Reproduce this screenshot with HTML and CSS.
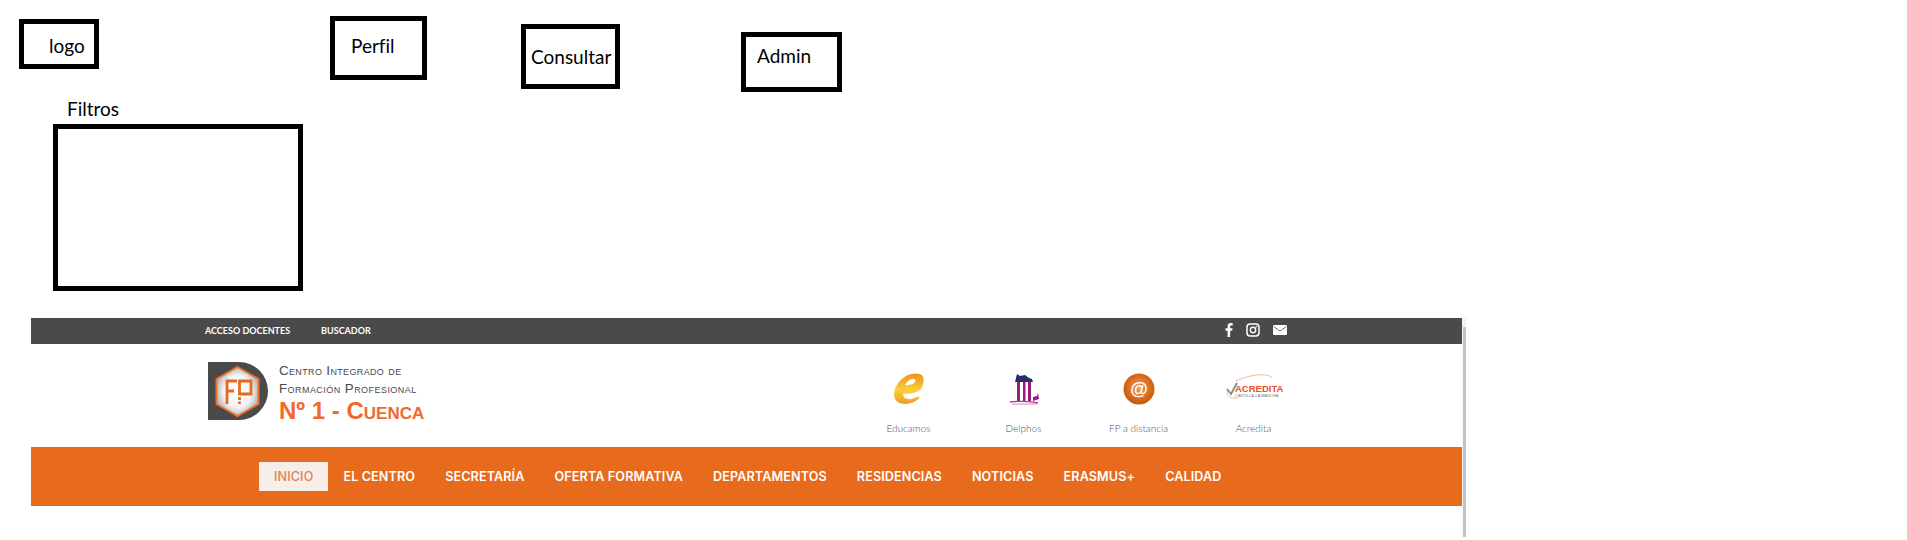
FILE: index.html
```html
<!DOCTYPE html>
<html lang="es">
<head>
<meta charset="utf-8">
<title>Boceto</title>
<link rel="stylesheet" href="styles.css">
</head>
<body>
<div class="canvas">
  <div class="box box-logo"><span class="box-text">logo</span></div>
  <div class="box box-perfil"><span class="box-text">Perfil</span></div>
  <div class="box box-consultar"><span class="box-text">Consultar</span></div>
  <div class="box box-admin"><span class="box-text">Admin</span></div>
  <div class="filter-label box-text">Filtros</div>
  <div class="box box-filtros"></div>

  <section class="site">
    <div class="topbar">
      <a class="top-link">ACCESO DOCENTES</a>
      <a class="top-link">BUSCADOR</a>
      <div class="social">
        <svg class="soc soc-f" viewBox="0 0 9 16"><path fill="#fff" d="M5.8 16V8.8h2.4l.4-2.8H5.8V4.2c0-.8.2-1.3 1.400-1.300h1.500V.3C8.400.2 7.600 0 6.500 0 4.300 0 2.900 1.300 2.900 3.800V6H.5v2.800h2.400V16z"/></svg>
        <svg class="soc soc-i" viewBox="0 0 14 14"><rect x="1" y="1" width="12" height="12" rx="3.200" fill="none" stroke="#fff" stroke-width="1.500"/><circle cx="7" cy="7" r="2.700" fill="none" stroke="#fff" stroke-width="1.400"/><circle cx="10.400" cy="3.600" r=".8" fill="#fff"/></svg>
        <svg class="soc soc-m" viewBox="0 0 14 10"><rect width="14" height="10" rx="1" fill="#fff"/><path d="M.5 1.500 7 6l6.500-4.500" fill="none" stroke="#494a49" stroke-width=".8"/></svg>
      </div>
    </div>

    <div class="masthead">
      <div class="brand">
        <svg class="brand-mark" viewBox="0 0 60 58">
          <defs>
            <radialGradient id="hexfill" cx=".5" cy=".5" r=".55">
              <stop offset="0" stop-color="#fff"/><stop offset=".6" stop-color="#f4f4f4"/><stop offset="1" stop-color="#a9a9a9"/>
            </radialGradient>
          </defs>
          <path fill="#4a4a4a" d="M0 0h31a29 29 0 0 1 0 58H0z"/>
          <path fill="url(#hexfill)" stroke="#e8742c" stroke-width="2" d="M29.500 5l21 12v25l-21 12-21-12V17z"/>
          <path fill="none" stroke="#e8691f" stroke-width="2.800" d="M19 42V19h10M19 29h7M31.500 19H43V32H31.500z"/>
          <path fill="none" stroke="#e8691f" stroke-width="2.800" d="M31.500 35v3M31.500 39.500v2.500"/>
        </svg>
        <div class="brand-text">
          <div class="brand-line">Centro Integrado de</div>
          <div class="brand-line brand-second">Formación Profesional</div>
          <div class="brand-name">Nº 1 - Cuenca</div>
        </div>
      </div>
      <div class="quick">
        <div class="quick-item">
          <svg class="quick-icon" viewBox="0 0 32 32">
            <defs><linearGradient id="eg" x1="0" y1="0" x2="0" y2="1"><stop offset="0" stop-color="#ef9021"/><stop offset=".55" stop-color="#fbd13a"/><stop offset="1" stop-color="#ef9a2a"/></linearGradient></defs>
            <path fill="url(#eg)" d="M29.500 3c-3-3.300-11-3.300-17.500.8C5 8.200 1 15.500 1 21.500c0 6.800 5.500 9.500 11 9.500 5.500 0 11-2.300 14.500-6l-1-1.700c-3.500 2-7 3-10 2.800-3.500-.2-5.500-2-5.300-5.500 7 .3 14-.7 17.800-4.600C31 12 31.500 6 29.500 3zm-7 4.800c-.6 2.800-5 4.700-10.500 4.700 1.500-3.300 4.500-6.500 7.500-6.500 1.800 0 3.300.4 3 1.800z"/>
          </svg>
          <span class="quick-label">Educamos</span>
        </div>
        <div class="quick-item">
          <svg class="quick-icon" viewBox="0 0 32 32">
            <path fill="#23306b" d="M7 9l2-8 3 2 5-1 4 3 3 1 1 3z"/>
            <path fill="#9a1c78" d="M9 9h3v19H9zM15 9h2.500v19H15zM20 9h3v19h-3zM25 24l4-1 1-3 1 6-6 2z"/>
            <path fill="none" stroke="#b23a92" stroke-width="1.300" d="M2 29c7-1 20-1 28 1"/>
            <path fill="none" stroke="#d687c0" stroke-width="1" d="M4 31h25"/>
          </svg>
          <span class="quick-label">Delphos</span>
        </div>
        <div class="quick-item">
          <svg class="quick-icon" viewBox="0 0 32 32">
            <defs><radialGradient id="ag" cx=".5" cy=".45" r=".55"><stop offset="0" stop-color="#ef9c5c"/><stop offset=".7" stop-color="#d9691b"/><stop offset="1" stop-color="#c2570f"/></radialGradient></defs>
            <circle cx="16" cy="16" r="15.500" fill="url(#ag)"/>
            <text class="at-sign" x="16" y="22" text-anchor="middle">@</text>
          </svg>
          <span class="quick-label">FP a distancia</span>
        </div>
        <div class="quick-item">
          <svg class="quick-icon quick-acredita" viewBox="0 0 60 32">
            <path fill="none" stroke="#f0a184" stroke-width=".8" d="M12 8C24 2 44-1 48 5M4 17c-3 6 2 9 10 8"/>
            <path fill="none" stroke="#8b8b8b" stroke-width="2" d="M3 16l4 5 6-11"/>
            <text class="acr-title" x="11" y="19">ACREDITA</text>
            <text class="acr-sub" x="11" y="24">CASTILLA-LA MANCHA</text>
          </svg>
          <span class="quick-label">Acredita</span>
        </div>
      </div>
    </div>

    <nav class="nav">
      <a class="nav-item is-active">INICIO</a>
      <a class="nav-item">EL CENTRO</a>
      <a class="nav-item">SECRETARÍA</a>
      <a class="nav-item">OFERTA FORMATIVA</a>
      <a class="nav-item">DEPARTAMENTOS</a>
      <a class="nav-item">RESIDENCIAS</a>
      <a class="nav-item">NOTICIAS</a>
      <a class="nav-item">ERASMUS+</a>
      <a class="nav-item">CALIDAD</a>
    </nav>
    <div class="scroll-track"><div class="scroll-thumb"></div></div>
  </section>
</div>
</body>
</html>
```
FILE: styles.css
```css
* { box-sizing: border-box; }
html, body { margin: 0; padding: 0; background: #fff; overflow: hidden; }
.canvas { position: relative; width: 1907px; height: 540px; background: #fff; font-family: "Liberation Sans", sans-serif; }

.box { position: absolute; border: 5px solid #000; background: #fff; }
.box-text { position: absolute; font-family: Lato, sans-serif; font-size: 19px; line-height: 24px; color: #000; white-space: nowrap; font-variant-ligatures: none; }
.box-logo { left: 19px; top: 19px; width: 80px; height: 50px; }
.box-logo .box-text { left: 25px; top: 10px; }
.box-perfil { left: 330px; top: 16px; width: 97px; height: 64px; }
.box-perfil .box-text { left: 16px; top: 13px; }
.box-consultar { left: 521px; top: 24px; width: 99px; height: 65px; }
.box-consultar .box-text { left: 5px; top: 16px; }
.box-admin { left: 741px; top: 32px; width: 101px; height: 60px; }
.box-admin .box-text { left: 11px; top: 7px; }
.filter-label { left: 67px; top: 97px; }
.box-filtros { left: 53px; top: 124px; width: 250px; height: 167px; }

.site { position: absolute; left: 31px; top: 318px; width: 1431px; height: 222px; }
.scroll-track { position: absolute; left: 1431px; top: 0; width: 4px; height: 219px; background: #f3f3f3; }
.scroll-thumb { margin: 9px 0 0 1px; width: 3px; height: 210px; background: #c4c4c4; }

.topbar { display: flex; align-items: center; height: 26px; padding: 0 0 2px 174px; background: #494a49; }
.top-link { font-family: Lato, sans-serif; font-size: 9px; font-weight: 700; color: #fff; margin-right: 31px; white-space: nowrap; }
.social { display: flex; align-items: center; gap: 13px; margin-left: 823px; }
.soc { display: block; }
.soc-f { width: 8px; height: 14px; }
.soc-i { width: 14px; height: 14px; }
.soc-m { width: 14px; height: 10px; }

.masthead { display: flex; height: 103px; }
.brand { display: flex; gap: 11px; margin-left: 177px; padding-top: 18px; width: 643px; }
.brand-mark { display: block; width: 60px; height: 58px; }
.brand-text { width: 160px; }
.brand-line { font-variant: small-caps; font-size: 13.400px; letter-spacing: .35px; line-height: 18px; height: 18px; color: #4a4a4a; white-space: nowrap; }
.brand-second { height: 15px; font-size: 13.300px; letter-spacing: .45px; }
.brand-name { margin-top: 4px; font-variant: small-caps; font-size: 24px; line-height: 24px; font-weight: 700; color: #f2682c; white-space: nowrap; }

.quick { display: flex; }
.quick-item { display: flex; flex-direction: column; align-items: center; width: 115px; padding-top: 29px; }
.quick-icon { display: block; width: 32px; height: 32px; }
.quick-acredita { width: 60px; }
.quick-label { margin-top: 16px; font-family: Lato, sans-serif; font-weight: 300; font-size: 10px; line-height: 14px; color: #555; white-space: nowrap; }
.at-sign { font-family: "Liberation Sans", sans-serif; font-size: 18px; font-weight: 700; fill: #fff; }
.acr-title { font-family: "Liberation Sans", sans-serif; font-size: 9.500px; font-weight: 700; fill: #e8502a; }
.acr-sub { font-family: "Liberation Sans", sans-serif; font-size: 4px; fill: #777; }

.nav { display: flex; align-items: center; height: 59px; padding-left: 228px; background: #e86a1c; }
.nav-item { padding: 0 15px; height: 29px; line-height: 29px; font-family: Inter, sans-serif; font-size: 12.600px; letter-spacing: .12px; font-weight: 600; color: #fff; white-space: nowrap; }
.is-active { background: #f6eee9; color: #e8804a; font-weight: 500; }
```
